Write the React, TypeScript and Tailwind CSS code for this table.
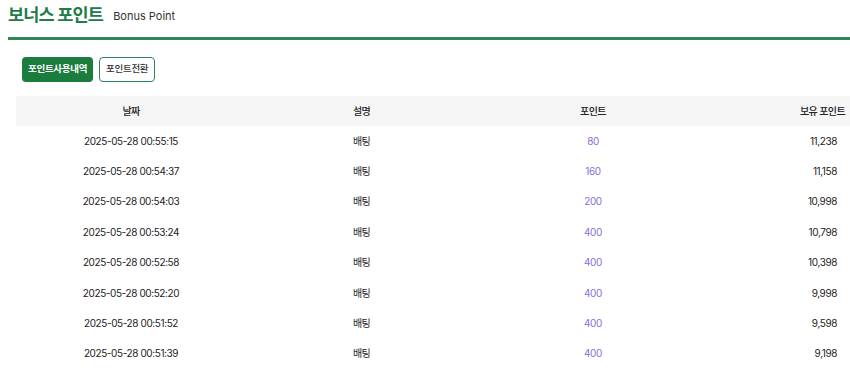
import React from "react";

type Row = { date: string; desc: string; point: number; balance: string };

const rows: Row[] = [
  { date: "2025-05-28 00:55:15", desc: "배팅", point: 80, balance: "11,238" },
  { date: "2025-05-28 00:54:37", desc: "배팅", point: 160, balance: "11,158" },
  { date: "2025-05-28 00:54:03", desc: "배팅", point: 200, balance: "10,998" },
  { date: "2025-05-28 00:53:24", desc: "배팅", point: 400, balance: "10,798" },
  { date: "2025-05-28 00:52:58", desc: "배팅", point: 400, balance: "10,398" },
  { date: "2025-05-28 00:52:20", desc: "배팅", point: 400, balance: "9,998" },
  { date: "2025-05-28 00:51:52", desc: "배팅", point: 400, balance: "9,598" },
  { date: "2025-05-28 00:51:39", desc: "배팅", point: 400, balance: "9,198" },
];

export default function App() {
  return (
    <div
      className="min-h-[369px] w-[850px] overflow-hidden bg-white text-[#222]"
      style={{ fontFamily: 'Inter, "Noto Sans CJK KR", sans-serif' }}
    >
      <header className="flex items-end gap-[10px] pl-[8px] pt-[3px]">
        <h1 className="text-[17.5px] font-bold leading-[24px] tracking-[-0.8px] text-[#237b47]">보너스 포인트</h1>
        <span className="pb-[3px] text-[11px] leading-[16px] text-[#333]">Bonus Point</span>
      </header>
      <div className="ml-[8px] mt-[10px] h-[3px] bg-[#2e8556]" />

      <div className="flex gap-[6px] pl-[22px] pt-[17px]">
        <button className="h-[25px] rounded-[4px] bg-[#1a7d3d] px-[6px] text-[9.5px] font-bold tracking-[-0.3px] text-white">
          포인트사용내역
        </button>
        <button className="h-[25px] rounded-[4px] border border-[#2e8556] bg-white px-[6px] text-[9.5px] font-medium tracking-[-0.3px] text-[#333]">
          포인트전환
        </button>
      </div>

      <div className="pl-[16px] pt-[14px]">
        <table className="w-[834px] table-fixed border-collapse text-[10px] tracking-[-0.4px]">
          <colgroup>
            <col className="w-[230px]" />
            <col className="w-[231px]" />
            <col className="w-[232px]" />
            <col className="w-[141px]" />
          </colgroup>
          <thead>
            <tr className="h-[30px] bg-[#f5f5f5] text-[#222]">
              <th className="text-center font-medium tracking-[-0.6px]">날짜</th>
              <th className="text-center font-medium tracking-[-0.6px]">설명</th>
              <th className="text-center font-medium tracking-[-0.6px]">포인트</th>
              <th className="pr-[5px] text-right font-medium tracking-[-0.6px]">보유 포인트</th>
            </tr>
          </thead>
          <tbody>
            {rows.map((r) => (
              <tr key={r.date} className="h-[30.4px]">
                <td className="text-center">{r.date}</td>
                <td className="text-center tracking-[-0.6px]">{r.desc}</td>
                <td className="text-center text-[#8a6fd8]">{r.point}</td>
                <td className="pr-[13px] text-right">{r.balance}</td>
              </tr>
            ))}
          </tbody>
        </table>
      </div>
    </div>
  );
}
